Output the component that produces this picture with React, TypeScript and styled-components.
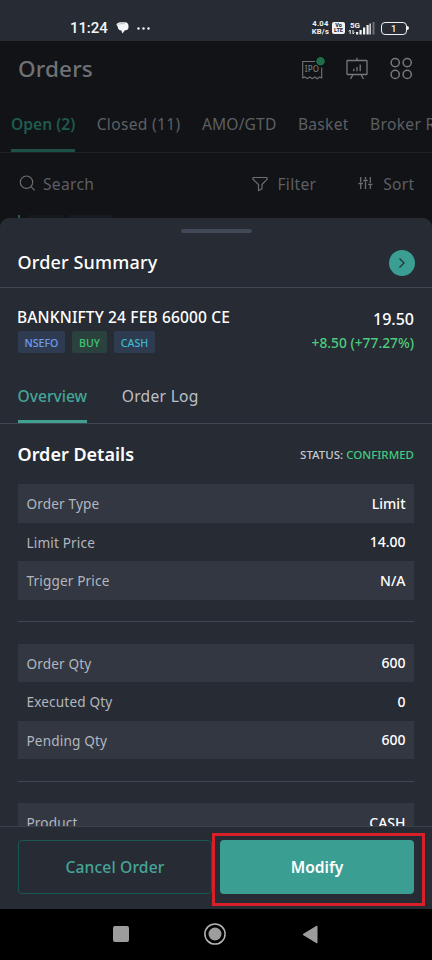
import React from "react";
import styled, { createGlobalStyle } from "styled-components";

const Global = createGlobalStyle`
  *{box-sizing:border-box}
  body{margin:0;background:#111317;font-family:"Noto Sans","Open Sans",sans-serif}
`;

const Screen = styled.div`
  width: 432px;
  height: 960px;
  display: flex;
  flex-direction: column;
  overflow: hidden;
  background: #111317;
`;

const Text = styled.span<{ $size: number; $color?: string; $weight?: number; $track?: number }>`
  font-size: ${(p) => p.$size}px;
  line-height: 1.3;
  color: ${(p) => p.$color ?? "#fff"};
  font-weight: ${(p) => p.$weight ?? 400};
  letter-spacing: ${(p) => p.$track ?? 0}px;
  white-space: nowrap;
`;

/* ---------- status bar ---------- */
const StatusBar = styled.header`
  flex: none;
  height: 41px;
  padding: 15px 23px 0 70px;
  display: flex;
  justify-content: space-between;
  background: #272b34;
`;
const StatusGroup = styled.div<{ $gap: number }>`
  height: 26px;
  display: flex;
  align-items: center;
  gap: ${(p) => p.$gap}px;
`;
const Clock = styled.span`
  width: 37px;
  font: 500 15px/20px Roboto, sans-serif;
  letter-spacing: -0.1px;
  color: #f4f5f6;
`;
const NetSpeed = styled.div`
  font: 700 7.6px/7.7px Roboto, sans-serif;
  letter-spacing: 0.2px;
  color: #f0f1f2;
  text-align: center;
  white-space: nowrap;
`;
const VoLte = styled.div`
  width: 13px;
  height: 12px;
  border-radius: 2px;
  background: #f0f1f2;
  color: #272b34;
  font: 800 5.5px/5.6px Roboto, sans-serif;
  text-align: center;
  padding-top: 0.5px;
`;
const Battery = styled.div`
  width: 28px;
  height: 13px;
  margin-left: 3px;
  display: flex;
  align-items: center;
`;
const BatteryCell = styled.div`
  width: 25.5px;
  height: 13px;
  border: 1.5px solid #f0f1f2;
  border-radius: 4px;
  font: 500 9.5px/11px Roboto, sans-serif;
  color: #f0f1f2;
  text-align: center;
`;
const BatteryTip = styled.div`
  width: 2px;
  height: 4px;
  margin-left: 0.5px;
  border-radius: 0 2px 2px 0;
  background: #f0f1f2;
`;

/* ---------- dimmed orders page ---------- */
const Backdrop = styled.section`
  flex: none;
  height: 177px;
  overflow: hidden;
  background: #111317;
`;
const TitleBar = styled.div`
  height: 55px;
  padding: 0 19px 0 18px;
  display: flex;
  align-items: center;
  justify-content: space-between;
`;
const TitleActions = styled.div`
  display: flex;
  align-items: center;
  gap: 20px;
`;
const PageTabs = styled.nav`
  height: 57px;
  padding-left: 11px;
  display: flex;
  gap: 21.5px;
  border-bottom: 1px solid #1e2126;
`;
const PageTab = styled.div<{ $active?: boolean }>`
  flex: none;
  height: 56px;
  padding-top: 17px;
  border-bottom: ${(p) => (p.$active ? "3px solid #1d5047" : "0")};
`;
const Tools = styled.div`
  height: 62px;
  padding: 0 17.5px 0 19px;
  display: flex;
  align-items: center;
`;
const Tool = styled.div<{ $gap: number; $push?: boolean; $left?: number }>`
  display: flex;
  align-items: center;
  gap: ${(p) => p.$gap}px;
  margin-left: ${(p) => (p.$push ? "auto" : `${p.$left ?? 0}px`)};
`;
const Peek = styled.div`
  display: flex;
  align-items: flex-end;
  height: 3px;
  padding-left: 18px;
`;
const PeekMark = styled.div<{ $w: number; $ml: number; $c: string }>`
  width: ${(p) => p.$w}px;
  height: 3px;
  margin-left: ${(p) => p.$ml}px;
  background: ${(p) => p.$c};
`;

/* ---------- bottom sheet ---------- */
const Sheet = styled.main`
  flex: none;
  height: 691px;
  display: flex;
  flex-direction: column;
  background: #272b34;
  border-radius: 9px 9px 0 0;
`;
const Grip = styled.div`
  flex: none;
  width: 71px;
  height: 4px;
  margin: 11px auto 0 180.5px;
  border-radius: 2px;
  background: #414857;
`;
const SheetHead = styled.div`
  flex: none;
  height: 55px;
  padding: 5px 17.5px 0 17.5px;
  display: flex;
  align-items: center;
  justify-content: space-between;
  border-bottom: 1px solid #414751;
`;
const GoButton = styled.button`
  width: 26px;
  height: 26px;
  padding: 0;
  border: 0;
  border-radius: 50%;
  display: flex;
  align-items: center;
  justify-content: center;
  background: #3a9e92;
`;
const Instrument = styled.div`
  flex: none;
  height: 80px;
  padding: 19px 18px 0 17px;
  display: flex;
  justify-content: space-between;
`;
const Stack = styled.div<{ $end?: boolean }>`
  display: flex;
  flex-direction: column;
  align-items: ${(p) => (p.$end ? "flex-end" : "flex-start")};
  padding-top: ${(p) => (p.$end ? 2 : 0)}px;
  gap: ${(p) => (p.$end ? 4 : 3.5)}px;
`;
const Tags = styled.div`
  display: flex;
  gap: 7px;
  padding-left: 1px;
`;
const Tag = styled.span<{ $w: number; $bg: string; $fg: string }>`
  width: ${(p) => p.$w}px;
  height: 22px;
  border-radius: 2px;
  background: ${(p) => p.$bg};
  color: ${(p) => p.$fg};
  font-size: 10.6px;
  line-height: 24px;
  font-weight: 500;
  text-align: center;
`;
const SheetTabs = styled.nav`
  flex: none;
  height: 56px;
  padding-left: 17.5px;
  display: flex;
  gap: 34.5px;
  border-bottom: 1px solid #414751;
`;
const SheetTab = styled.div<{ $active?: boolean }>`
  height: 55px;
  padding-top: 17px;
  border-bottom: ${(p) => (p.$active ? "3px solid #3f9f92" : "0")};
`;
const Details = styled.div`
  flex: none;
  height: 402px;
  padding: 0 18px 0 17.5px;
  overflow: hidden;
`;
const DetailsHead = styled.div`
  height: 60px;
  padding-top: 2px;
  display: flex;
  align-items: center;
  justify-content: space-between;
`;
const Group = styled.div`
  padding-bottom: 21.5px;
  margin-bottom: 21.5px;
  border-bottom: 1px solid #414751;
`;
const Row = styled.div<{ $shade: boolean }>`
  height: 38.5px;
  padding: 1.5px 8.5px 0 9px;
  display: flex;
  align-items: center;
  justify-content: space-between;
  background: ${(p) => (p.$shade ? "#333741" : "transparent")};
`;
const Footer = styled.footer`
  flex: none;
  height: 84px;
  padding: 6px 7px 0 18px;
  display: flex;
  border-top: 1px solid #3b404b;
`;
const CancelButton = styled.button`
  width: 194px;
  height: 54px;
  margin-top: 7px;
  padding: 0;
  border: 1px solid #17584f;
  border-radius: 4px;
  background: transparent;
  font-family: inherit;
`;
const Highlight = styled.div`
  width: 213px;
  height: 73px;
  border: 3px solid #d8202b;
  padding: 4px 0 0 5px;
`;
const ModifyButton = styled.button`
  width: 194px;
  height: 54px;
  padding: 0;
  border: 0;
  border-radius: 4px;
  background: #3a9e92;
  font-family: inherit;
`;
const NavBar = styled.div`
  flex: none;
  height: 51px;
  padding: 0 114.5px 1px 113px;
  display: flex;
  align-items: center;
  justify-content: space-between;
  background: #000;
`;

const GROUPS = [
  [["Order Type", "Limit"], ["Limit Price", "14.00"], ["Trigger Price", "N/A"]],
  [["Order Qty", "600"], ["Executed Qty", "0"], ["Pending Qty", "600"]],
  [["Product", "CASH"]],
];

const DIM = "#5d5f63";

const ChatIcon = () => (
  <svg width="13" height="12" viewBox="0 0 13 12">
    <path d="M4.2.3h5A3.3 3.3 0 0 1 12.5 4v1A3.3 3.3 0 0 1 9 8.3L6.3 11.6 5.4 8.5A3.7 3.7 0 0 1 1.8 5L.3 2.2Q2 .3 4.2 .3Z" fill="#f4f5f6" />
    <path d="M1.2 3.2Q2.5 1.700 5 1.700H9" fill="none" stroke="#8a8d92" strokeWidth=".5" />
  </svg>
);
const MoreDots = () => (
  <svg width="13" height="3" viewBox="0 0 13 3" fill="#f4f5f6">
    <circle cx="1.5" cy="1.5" r="1.2" /><circle cx="6.5" cy="1.5" r="1.2" /><circle cx="11.5" cy="1.5" r="1.2" />
  </svg>
);
const SignalIcon = () => (
  <svg width="27" height="14" viewBox="0 0 27 14">
    <text x="2" y="6.5" fontFamily="Roboto" fontWeight="700" fontSize="8" fill="#f0f1f2">5G</text>
    <path d="M2.2 13V9M.8 10.5 2.2 9M5 9V13M6.4 11.5 5 13" stroke="#f0f1f2" strokeWidth="1" fill="none" />
    <g fill="#f0f1f2">
      <rect x="8" y="11" width="2.2" height="2.5" /><rect x="11.5" y="9" width="2.2" height="4.5" />
      <rect x="15" y="6.5" width="2.2" height="7" /><rect x="18.5" y="4" width="2.2" height="9.5" />
      <rect x="21.5" y="2.5" width="1.3" height="11" />
      <rect x="24.5" y="1" width="2" height="12.5" opacity=".35" />
    </g>
  </svg>
);
const IpoIcon = () => (
  <svg width="24" height="24" viewBox="0 0 24 24">
    <path d="M14 4.500H1.700V21L3.800 20 6.300 21.700 8.800 20 11.300 21.700 13.800 20 16.300 21.700 18.500 20 20.700 21V10.500" fill="none" stroke="#707275" strokeWidth="1.100" />
    <text x="3.700" y="15.300" fontFamily="Noto Sans" fontWeight="500" fontSize="8" letterSpacing=".2" fill="#77797c">IPO</text>
    <circle cx="19.500" cy="4.300" r="5.300" fill="#08090b" />
    <circle cx="19.500" cy="4.300" r="4.300" fill="#1f6d48" />
  </svg>
);
const BoardIcon = () => (
  <svg width="24" height="24" viewBox="0 0 24 24" fill="none" stroke="#77797c" strokeWidth="1.3">
    <rect x="2" y="3.500" width="20" height="14" rx=".5" />
    <path d="M12 .8V3.500M8 17.500 5.500 22M16 17.500 18.500 22M8.800 11.800v2.500M12 10v4.300M15.200 7.500V14.300" />
  </svg>
);
const GridIcon = () => (
  <svg width="24" height="24" viewBox="0 0 24 24" fill="none" stroke="#77797c" strokeWidth="1.5">
    <circle cx="6.2" cy="5.600" r="4.100" /><circle cx="18.200" cy="5.600" r="4.100" />
    <circle cx="6.2" cy="17.400" r="4.100" /><circle cx="18.200" cy="17.400" r="4.100" />
  </svg>
);
const SearchIcon = () => (
  <svg width="17" height="17" viewBox="0 0 17 17" fill="none" stroke="#6b6d71" strokeWidth="1.2">
    <circle cx="7.5" cy="7.2" r="6.2" /><path d="m12 11.700 3.600 3.600" />
  </svg>
);
const FunnelIcon = () => (
  <svg width="16" height="16" viewBox="0 0 16 16" fill="none" stroke="#6b6d71" strokeWidth="1.2" strokeLinejoin="round">
    <path d="M1 1.500H15V3.300L10 8.500V12.800L6.500 14.700V8.500L1 3.300Z" />
  </svg>
);
const SlidersIcon = () => (
  <svg width="15" height="14" viewBox="0 0 15 14" fill="none" stroke="#6b6d71" strokeWidth="1.3">
    <path d="M2.700 0V5.200M2.700 6.200V12M.5 6.500H4.900M7.500 0V2.500M7.500 4.500V12M5.300 3.500H9.700M12.300 0V6M12.300 8V12M10.100 7.300H14.500" />
  </svg>
);

export default function App() {
  return (
    <Screen>
      <Global />
      <StatusBar>
        <StatusGroup $gap={8.5}>
          <Clock>11:24</Clock>
          <ChatIcon />
          <MoreDots />
        </StatusGroup>
        <StatusGroup $gap={3}>
          <NetSpeed>4.04<br />KB/s</NetSpeed>
          <VoLte>Vo<br />LTE</VoLte>
          <SignalIcon />
          <Battery><BatteryCell>1</BatteryCell><BatteryTip /></Battery>
        </StatusGroup>
      </StatusBar>

      <Backdrop>
        <TitleBar>
          <Text as="h1" $size={22.5} $weight={500} $color="#707174" $track={0.15}>Orders</Text>
          <TitleActions><IpoIcon /><BoardIcon /><GridIcon /></TitleActions>
        </TitleBar>
        <PageTabs>
          <PageTab $active><Text $size={15.6} $weight={600} $color="#1f5a4f">Open (2)</Text></PageTab>
          <PageTab><Text $size={15.6} $color={DIM} $track={0.3}>Closed (11)</Text></PageTab>
          <PageTab><Text $size={15.6} $color={DIM} $track={0.15}>AMO/GTD</Text></PageTab>
          <PageTab><Text $size={15.6} $color={DIM} $track={0.25}>Basket</Text></PageTab>
          <PageTab><Text $size={15.6} $color={DIM} $track={0.3}>Broker R</Text></PageTab>
        </PageTabs>
        <Tools>
          <Tool $gap={7}><SearchIcon /><Text $size={15.6} $color={DIM} $track={0.3}>Search</Text></Tool>
          <Tool $gap={9} $push><FunnelIcon /><Text $size={15.6} $color={DIM} $track={0.3}>Filter</Text></Tool>
          <Tool $gap={10} $left={42}><SlidersIcon /><Text $size={15.6} $color={DIM} $track={0.3}>Sort</Text></Tool>
        </Tools>
        <Peek>
          <PeekMark $w={2} $ml={0} $c="#245c45" />
          <PeekMark $w={36} $ml={8} $c="#14191b" />
          <PeekMark $w={43} $ml={5} $c="#151a23" />
        </Peek>
      </Backdrop>

      <Sheet>
        <Grip />
        <SheetHead>
          <Text as="h2" $size={18} $weight={500} $track={0.15}>Order Summary</Text>
          <GoButton aria-label="Open order">
            <svg width="8" height="12" viewBox="0 0 8 12" fill="none" stroke="#20353b" strokeWidth="1.3">
              <path d="m1.500 1.500 4.500 4.500-4.500 4.500" />
            </svg>
          </GoButton>
        </SheetHead>
        <Instrument>
          <Stack>
            <Text $size={15.5} $weight={500} $track={0.15}>BANKNIFTY 24 FEB 66000 CE</Text>
            <Tags>
              <Tag $w={47} $bg="#2f3b50" $fg="#6e9bef">NSEFO</Tag>
              <Tag $w={35} $bg="#2b413e" $fg="#42c675">BUY</Tag>
              <Tag $w={41} $bg="#2f3b50" $fg="#3eb8cf">CASH</Tag>
            </Tags>
          </Stack>
          <Stack $end>
            <Text $size={16} $weight={500}>19.50</Text>
            <Text $size={13.8} $weight={500} $color="#4ccb7d">+8.50 (+77.27%)</Text>
          </Stack>
        </Instrument>
        <SheetTabs>
          <SheetTab $active><Text $size={15.6} $weight={500} $color="#45a598">Overview</Text></SheetTab>
          <SheetTab><Text $size={15.6} $color="#bdc0c7" $track={0.3}>Order Log</Text></SheetTab>
        </SheetTabs>
        <Details>
          <DetailsHead>
            <Text as="h3" $size={18} $weight={600}>Order Details</Text>
            <Text $size={11.5} $color="#c5c8cd" $weight={500}>STATUS: <Text $size={11.5} $weight={500} $color="#42c980">CONFIRMED</Text></Text>
          </DetailsHead>
          {GROUPS.map((rows, g) => (
            <Group key={g}>
              {rows.map(([label, value], i) => (
                <Row key={label} $shade={i % 2 === 0}>
                  <Text $size={13.6} $color="#b2b6bf" $track={0.15}>{label}</Text>
                  <Text $size={14} $weight={500}>{value}</Text>
                </Row>
              ))}
            </Group>
          ))}
        </Details>
        <Footer>
          <CancelButton><Text $size={15.6} $weight={500} $color="#45a598" $track={0.15}>Cancel Order</Text></CancelButton>
          <Highlight>
            <ModifyButton><Text $size={15.6} $weight={600}>Modify</Text></ModifyButton>
          </Highlight>
        </Footer>
      </Sheet>

      <NavBar>
        <svg width="16" height="16" viewBox="0 0 16 16"><rect width="16" height="16" rx="2" fill="#9d9d9d" /></svg>
        <svg width="22" height="22" viewBox="0 0 22 22"><circle cx="11" cy="11" r="10.1" fill="none" stroke="#b5b5b5" strokeWidth="1.5" /><circle cx="11" cy="11" r="6.5" fill="#9d9d9d" /></svg>
        <svg width="16" height="19" viewBox="0 0 16 19"><path d="M15 1V18L1 9.500Z" fill="#9d9d9d" stroke="#9d9d9d" strokeLinejoin="round" /></svg>
      </NavBar>
    </Screen>
  );
}
